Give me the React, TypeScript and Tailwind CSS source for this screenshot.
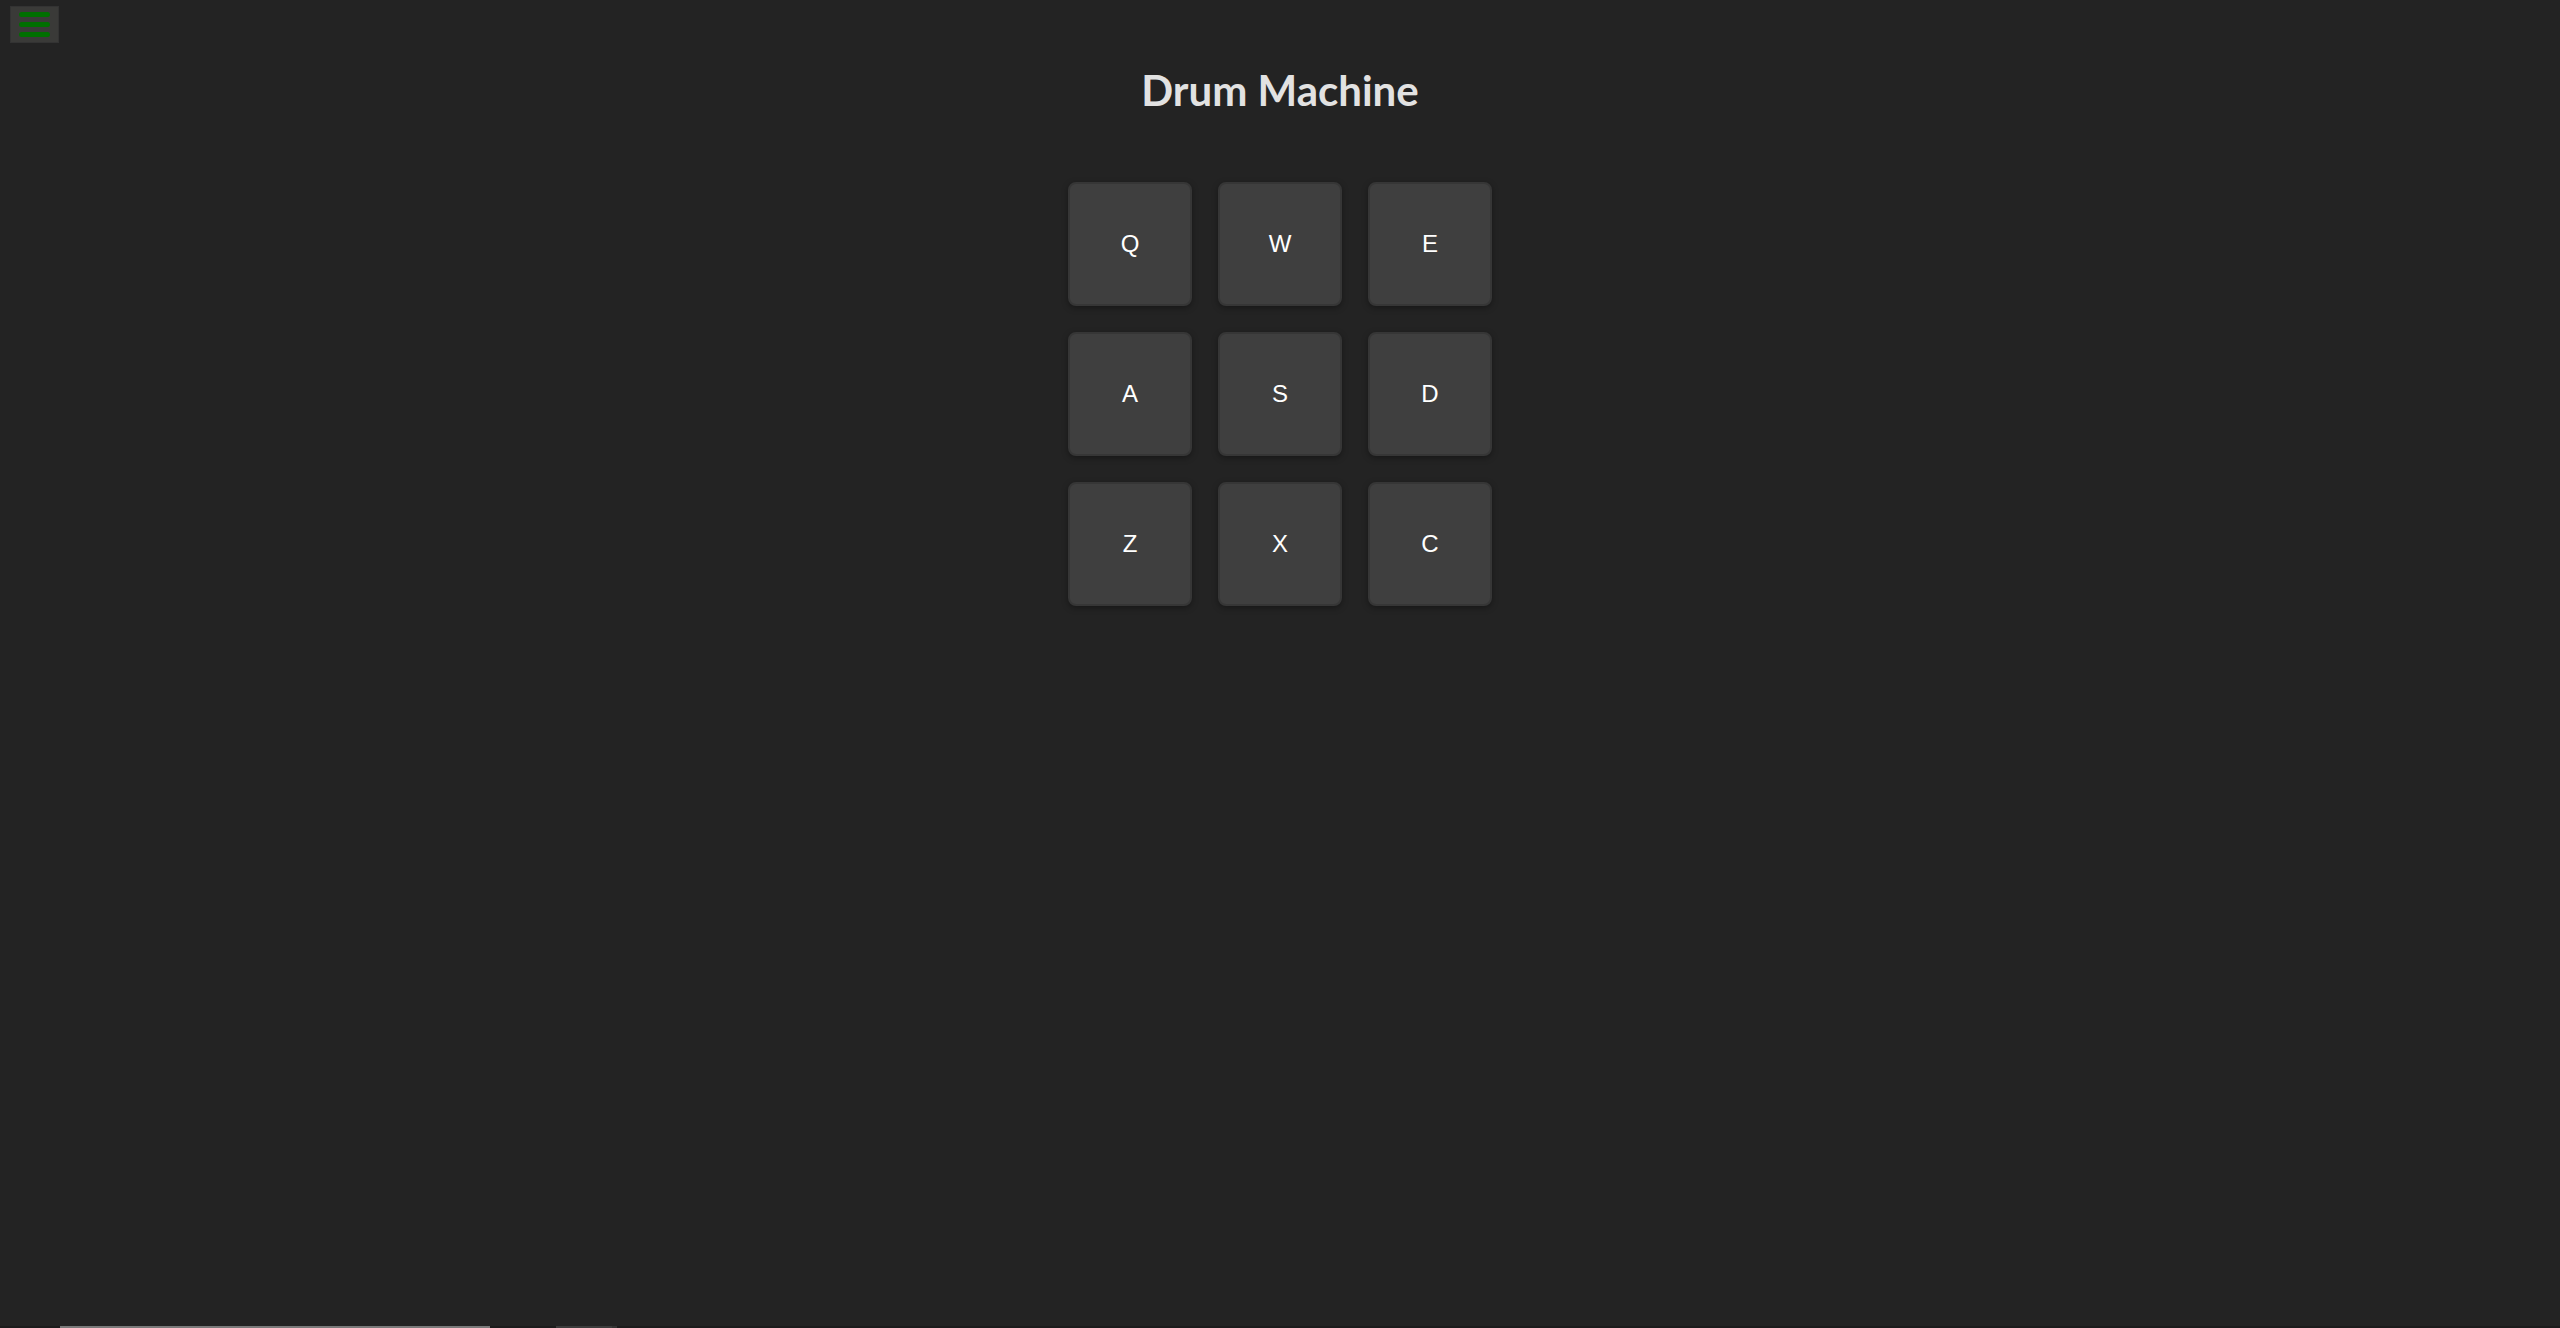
const pads = ["Q", "W", "E", "A", "S", "D", "Z", "X", "C"];

const DrumPad = ({ label }: { label: string }) => {
  return (
    <button className="w-[124px] h-[124px] rounded-[8px] border-2 border-[#363636] bg-[#3f3f3f] shadow-[0_2px_6px_rgba(0,0,0,0.35)] text-white text-[24px] font-['Liberation_Sans',Arial,sans-serif] flex items-center justify-center">
      {label}
    </button>
  );
};

const App = () => {
  return (
    <div className="relative h-screen bg-[#232323] flex flex-col overflow-hidden">
      {/* menu toggle */}
      <button className="absolute left-[10px] top-[6px] w-[49px] h-[37px] bg-[#3a3a38] border border-[#333] flex flex-col items-center justify-center gap-[5.5px]">
        <span className="block w-[31px] h-[4.5px] rounded-full bg-[#006f00]" />
        <span className="block w-[31px] h-[4.5px] rounded-full bg-[#006f00]" />
        <span className="block w-[31px] h-[4.5px] rounded-full bg-[#006f00]" />
      </button>

      <h1 className="pt-[66px] text-center text-[42px] leading-[48px] font-bold text-[#e2e2e2] font-['Lato',sans-serif]">
        Drum Machine
      </h1>

      <div className="mt-[68px] mx-auto grid grid-cols-3 gap-[26px] w-[424px]">
        {pads.map((p) => (
          <DrumPad key={p} label={p} />
        ))}
      </div>

      <div className="mt-auto h-[2px] bg-[#1c1c1c] flex">
        <div className="ml-[60px] w-[430px] bg-[#7a7a7a]" />
        <div className="ml-[66px] w-[56px] bg-[#3c3c3c]" />
        <div className="w-[5px] bg-[#333333]" />
      </div>
    </div>
  );
};

export default App;
